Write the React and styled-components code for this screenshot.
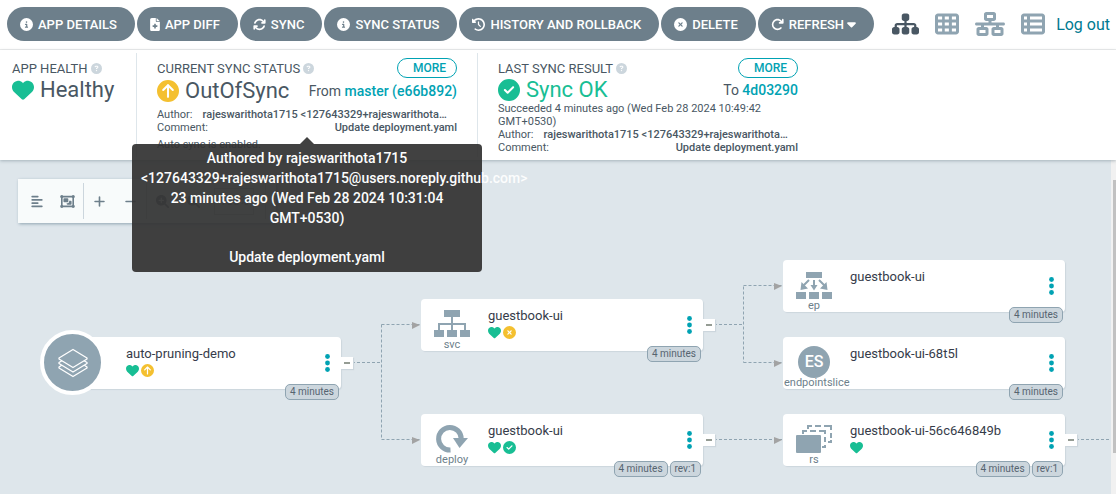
import React from 'react';
import styled, { createGlobalStyle } from 'styled-components';
import {
  FaCircleInfo, FaFileMedical, FaArrowsRotate, FaClockRotateLeft, FaCircleXmark,
  FaArrowRotateRight, FaCaretDown, FaSitemap, FaTableCells, FaNetworkWired, FaTableList,
  FaHeart, FaCircleArrowUp, FaCircleCheck, FaCircleQuestion, FaAlignLeft, FaObjectGroup,
  FaPlus, FaMinus, FaMagnifyingGlassPlus, FaMagnifyingGlassMinus,
} from 'react-icons/fa6';

const color = {
  slate: '#6d7f8b',
  text: '#495763',
  icon: '#8fa4b1',
  teal: '#00a2b3',
  green: '#18be94',
  yellow: '#f4c030',
  canvas: '#dee6eb',
  badge: '#ccd6dd',
};

const GlobalStyle = createGlobalStyle`
  * { box-sizing: border-box; }
  body { margin: 0; font-family: Roboto, "Liberation Sans", sans-serif; color: ${color.text}; background: #fff; }
  button, input { font-family: inherit; margin: 0; }
  button { cursor: pointer; }
`;

const Page = styled.div`
  display: flex;
  flex-direction: column;
  height: 100vh;
  overflow: hidden;
`;

const Toolbar = styled.header`
  display: flex;
  align-items: center;
  flex: none;
  padding: 7px 6px 8px 7px;
  border-bottom: 1px solid #eee;
  white-space: nowrap;
`;

const Actions = styled.div`
  display: flex;
  gap: 2px;
`;

const ActionButton = styled.button`
  display: flex;
  align-items: center;
  height: 34px;
  padding: 0 18px 0 13px;
  border: 0;
  border-radius: 17px;
  background: ${color.slate};
  color: #fff;
  font-size: 13px;
  font-weight: 500;
  svg { height: 13px; width: ${(p) => p.$iconWidth || 13}px; }
  span { padding-left: 5px; }
  span + svg { width: 9px; height: 14px; margin-left: 3px; }
`;

const Views = styled.nav`
  display: flex;
  align-items: center;
  gap: 16px;
  margin-left: auto;
  padding-right: 11px;
`;

const ViewButton = styled.button`
  display: flex;
  padding: 0;
  border: 0;
  background: none;
  color: ${(p) => (p.$active ? color.text : color.icon)};
  svg { height: 24px; width: ${(p) => p.$width}px; }
`;

const LogOut = styled.a`
  color: #007a91;
  font-size: 16px;
  text-decoration: none;
`;

const StatusPanel = styled.section`
  display: flex;
  flex: none;
  position: relative;
  z-index: 1;
  min-height: 110px;
  padding: 3px 0;
  background: #fff;
  box-shadow: 0 1px 3px rgba(109, 127, 139, 0.5);
`;

const StatusItem = styled.div`
  box-sizing: content-box;
  width: ${(p) => p.$width}px;
  padding: 5px 20px 0 ${(p) => (p.$first ? 12 : 20)}px;
  border-left: ${(p) => (p.$first ? 0 : 1)}px solid ${color.canvas};
  white-space: nowrap;
`;

const StatusHead = styled.div`
  display: flex;
  align-items: center;
  justify-content: space-between;
  height: 20px;
`;

const Label = styled.span`
  display: flex;
  align-items: center;
  gap: 3px;
  font-size: 13px;
  svg { width: 11px; height: 11px; color: ${color.badge}; }
`;

const MoreButton = styled.button`
  height: 20px;
  width: 60px;
  padding: 0 10px 0 15px;
  border: 1px solid ${color.teal};
  border-radius: 10px;
  background: #fff;
  color: ${color.teal};
  font-size: 12px;
  font-weight: 500;
`;

const ValueRow = styled.div`
  display: flex;
  align-items: center;
  justify-content: space-between;
  height: ${(p) => (p.$tall ? 25 : 24)}px;
  margin-bottom: ${(p) => (p.$tall ? 5 : 0)}px;
  font-size: 14px;
`;

const Value = styled.span`
  display: flex;
  align-items: center;
  gap: 6px;
  font-size: 22px;
  line-height: 24px;
  color: ${(p) => p.$color || color.text};
  svg { width: 22px; height: 22px; color: ${(p) => p.$icon}; }
`;

const RevisionLink = styled.a`
  color: ${color.teal};
  font-weight: 500;
  text-decoration: none;
`;

const Detail = styled.div`
  display: flex;
  justify-content: ${(p) => (p.$start ? 'flex-start' : 'space-between')};
  gap: 10px;
  margin-top: ${(p) => p.$space || 0}px;
  font-size: 11px;
  line-height: 13px;
  white-space: ${(p) => (p.$wrap ? 'normal' : 'nowrap')};
  strong { font-weight: 500; }
`;

const Tooltip = styled.div`
  position: absolute;
  z-index: 2;
  left: 132px;
  top: 94px;
  width: 350px;
  padding: 4px 9px 5px;
  border-radius: 4px;
  background: #333;
  opacity: 0.93;
  color: #fff;
  font-size: 14px;
  font-weight: 500;
  line-height: 20px;
  text-align: center;
  white-space: normal;
  &::before {
    content: '';
    position: absolute;
    left: 168px;
    top: -7px;
    border: solid transparent;
    border-width: 0 7px 7px;
    border-bottom-color: #333;
  }
  p { margin: 0 0 19px; }
  p:last-child { margin: 0; }
`;

const Canvas = styled.main`
  position: relative;
  flex: 1;
  overflow: hidden;
  background: ${color.canvas};
`;

const GraphTools = styled.div`
  position: absolute;
  left: 18px;
  top: 19px;
  display: flex;
  align-items: center;
  height: 44px;
  padding: 4px 10px 4px 3px;
  background: #f8fbfb;
  box-shadow: 1px 1px 3px ${color.icon};
`;

const ToolGroup = styled.div`
  display: flex;
  align-items: center;
  height: 36px;
  border-right: 1px solid ${color.badge};
  input {
    width: 40px;
    height: 27px;
    margin: 0 11px 0 5px;
    padding: 0;
    border: 1px solid ${color.badge};
    background: none;
    text-align: center;
    font-size: 12px;
    color: ${color.slate};
  }
`;

const ToolButton = styled.button`
  display: flex;
  justify-content: center;
  width: 31px;
  padding: 0;
  border: 0;
  background: none;
  color: ${color.slate};
  svg { height: 13px; width: ${(p) => p.$iconWidth || 13}px; }
`;

const Edges = styled.svg`
  position: absolute;
  left: 0;
  top: 0;
  path { fill: none; stroke: ${color.icon}; stroke-dasharray: 3 2; }
  polygon { fill: #a3a3a3; }
`;

const NodeCard = styled.article`
  position: absolute;
  left: ${(p) => p.$x}px;
  top: ${(p) => p.$y}px;
  display: flex;
  width: 282px;
  height: 52px;
  border-radius: 4px;
  background: #fff;
  box-shadow: 1px 1px 1px ${color.badge};
`;

const KindColumn = styled.div`
  display: flex;
  flex-direction: column;
  flex: none;
  width: 62px;
  padding-top: 9px;
`;

const KindIcon = styled.div`
  display: flex;
  justify-content: center;
  align-items: flex-start;
  height: 31px;
`;

const KindLabel = styled.div`
  display: flex;
  align-self: flex-start;
  justify-content: center;
  min-width: 100%;
  padding: 0 1px;
  font-size: 11px;
  line-height: 12px;
  color: ${color.slate};
  white-space: nowrap;
`;

const RootBadge = styled.div`
  display: flex;
  align-items: center;
  justify-content: center;
  flex: none;
  width: 65px;
  height: 65px;
  margin: -7px 16px 0 -19px;
  border: 4px solid #fff;
  border-radius: 50%;
  background: ${color.icon};
`;

const SliceBadge = styled.div`
  flex: none;
  width: 32px;
  height: 32px;
  border-radius: 50%;
  background: ${color.icon};
  color: #fff;
  font-size: 16px;
  font-weight: 500;
  line-height: 32px;
  text-align: center;
`;

const NodeBody = styled.div`
  flex: 1;
  padding: 8px 0 0 5px;
  font-size: 13px;
  line-height: 17px;
  color: #363c4a;
`;

const NodeStatus = styled.div`
  display: flex;
  gap: 2px;
  padding-top: 2px;
  svg { width: 13px; height: 13px; }
`;

const MenuButton = styled.button`
  align-self: center;
  display: flex;
  padding: 0 11px;
  border: 0;
  background: none;
`;

const Badges = styled.div`
  position: absolute;
  right: 2px;
  bottom: -11px;
  display: flex;
  gap: 2px;
  span {
    height: 16px;
    padding: 0 4px;
    border: 1px solid ${color.icon};
    border-radius: 5px;
    background: ${color.badge};
    color: #566470;
    font-size: 10px;
    line-height: 14px;
    white-space: nowrap;
  }
`;

const Collapse = styled.button`
  position: absolute;
  left: 282px;
  top: 20px;
  display: flex;
  align-items: center;
  justify-content: center;
  width: 12px;
  height: 12px;
  padding: 0;
  border: 0;
  background: #fff;
  box-shadow: 1px 1px 1px ${color.badge};
  &::before { content: ''; width: 6px; height: 2px; background: #959c94; }
`;

const ScrollTrack = styled.div`
  position: absolute;
  right: 0;
  top: 0;
  bottom: 0;
  width: 5px;
  padding: 20px 0 0 2px;
  background: #f1f1f1;
  &::before { content: ''; display: block; height: 273px; background: #c1c1c1; }
`;

const LayersIcon = () => (
  <svg width="30" height="30" viewBox="0 0 30 30" fill={color.icon} stroke="#fff" strokeWidth="1.3" strokeLinejoin="round">
    <path d="M1 19 15 10 29 19v1L15 28.500 1 20z" />
    <path d="M1 14.500 15 6 29 14.500v1L15 24 1 15.500z" />
    <path d="M1 10 15 1.500 29 10v1L15 19.500 1 11z" />
  </svg>
);

const ServiceIcon = () => (
  <svg width="36" height="30" viewBox="0 0 36 30" fill={color.icon}>
    <path d="M10 2h16v7H10zM0 22h10v7H0zM13 22h10v7H13zM26 22h10v7H26z" />
    <path d="M18 9v13M5 22v-6h26v6" fill="none" stroke={color.icon} strokeWidth="2" />
  </svg>
);

const EndpointIcon = () => (
  <svg width="36" height="30" viewBox="0 0 36 30" fill={color.icon}>
    <path d="M10 3h16v6H10zM0 23h10v7H0zM13 23h10v7H13zM26 23h10v7H26z" />
    <path d="M4.500 21l1-8 6.500 6.500zM31.500 21l-1-8-6.500 6.500zM14.500 16h7L18 21.500z" />
    <path d="M13 11l-6 6M23 11l6 6M18 11v6" stroke={color.icon} strokeWidth="2" />
  </svg>
);

const DeployIcon = () => (
  <svg width="36" height="30" viewBox="0 0 36 30">
    <path d="M16.500 27A11.300 11.300 0 1 1 27.200 15.700" fill="none" stroke={color.icon} strokeWidth="5" />
    <path d="M19 15h15l-8.500 10z" fill={color.icon} />
  </svg>
);

const ReplicaIcon = () => (
  <svg width="36" height="30" viewBox="0 0 36 30">
    <path d="M12 6V3h4M19 3h6M28 3h7v4M35 10v5M35 17v2h-3" fill="none" stroke={color.icon} strokeWidth="2" />
    <path d="M7 11V8h4M14 8h6M23 8h6v3M29 14v5M29 22v2h-3" fill="none" stroke={color.icon} strokeWidth="2" />
    <rect y="12" width="25" height="18" rx="1" fill={color.icon} />
  </svg>
);

const Dots = () => (
  <svg width="5" height="18" viewBox="0 0 5 18" fill={color.teal}>
    <circle cx="2.500" cy="2.500" r="2.400" />
    <circle cx="2.500" cy="9" r="2.400" />
    <circle cx="2.500" cy="15.500" r="2.400" />
  </svg>
);

const statusIcons = {
  healthy: <FaHeart key="healthy" color={color.green} />,
  outOfSync: <FaCircleArrowUp key="outOfSync" color={color.yellow} />,
  pruned: <FaCircleXmark key="pruned" color={color.yellow} />,
  synced: <FaCircleCheck key="synced" color={color.green} />,
};

const actions = [
  { label: 'APP DETAILS', Icon: FaCircleInfo },
  { label: 'APP DIFF', Icon: FaFileMedical, width: 10 },
  { label: 'SYNC', Icon: FaArrowsRotate },
  { label: 'SYNC STATUS', Icon: FaCircleInfo },
  { label: 'HISTORY AND ROLLBACK', Icon: FaClockRotateLeft },
  { label: 'DELETE', Icon: FaCircleXmark },
  { label: 'REFRESH', Icon: FaArrowRotateRight, Caret: FaCaretDown },
];

const views = [
  { label: 'Tree', Icon: FaSitemap, width: 27 },
  { label: 'Pods', Icon: FaTableCells, width: 24 },
  { label: 'Network', Icon: FaNetworkWired, width: 30 },
  { label: 'List', Icon: FaTableList, width: 24 },
];

const nodes = [
  { x: 59, y: 177, name: 'auto-pruning-demo', root: true, status: ['healthy', 'outOfSync'], badges: ['4 minutes'], open: true },
  { x: 421, y: 139, name: 'guestbook-ui', kind: 'svc', icon: <ServiceIcon />, status: ['healthy', 'pruned'], badges: ['4 minutes'], open: true },
  { x: 421, y: 254, name: 'guestbook-ui', kind: 'deploy', icon: <DeployIcon />, status: ['healthy', 'synced'], badges: ['4 minutes', 'rev:1'], open: true },
  { x: 783, y: 100, name: 'guestbook-ui', kind: 'ep', icon: <EndpointIcon />, status: [], badges: ['4 minutes'] },
  { x: 783, y: 177, name: 'guestbook-ui-68t5l', kind: 'endpointslice', icon: <SliceBadge>ES</SliceBadge>, status: [], badges: ['4 minutes'] },
  { x: 783, y: 254, name: 'guestbook-ui-56c646849b', kind: 'rs', icon: <ReplicaIcon />, status: ['healthy'], badges: ['4 minutes', 'rev:1'], open: true },
];

const arrows = [[412, 165], [412, 280], [774, 126], [774, 203], [774, 280]];

function Node({ node }) {
  return (
    <NodeCard $x={node.x} $y={node.y}>
      {node.root ? (
        <RootBadge><LayersIcon /></RootBadge>
      ) : (
        <KindColumn>
          <KindIcon>{node.icon}</KindIcon>
          <KindLabel>{node.kind}</KindLabel>
        </KindColumn>
      )}
      <NodeBody>
        {node.name}
        <NodeStatus>{node.status.map((s) => statusIcons[s])}</NodeStatus>
      </NodeBody>
      <MenuButton aria-label="Resource menu"><Dots /></MenuButton>
      <Badges>{node.badges.map((b) => <span key={b}>{b}</span>)}</Badges>
      {node.open && <Collapse aria-label="Collapse" />}
    </NodeCard>
  );
}

function CommitDetails() {
  return (
    <>
      <Detail $start>Author: <strong>rajeswarithota1715 &lt;127643329+rajeswarithota…</strong></Detail>
      <Detail>Comment: <strong>Update deployment.yaml</strong></Detail>
    </>
  );
}

export default function App() {
  return (
    <Page>
      <GlobalStyle />
      <Toolbar>
        <Actions>
          {actions.map(({ label, Icon, width, Caret }) => (
            <ActionButton key={label} $iconWidth={width}>
              <Icon /><span>{label}</span>{Caret && <Caret />}
            </ActionButton>
          ))}
        </Actions>
        <Views>
          {views.map(({ label, Icon, width }, i) => (
            <ViewButton key={label} aria-label={label} $width={width} $active={i === 0}><Icon /></ViewButton>
          ))}
        </Views>
        <LogOut href="#logout">Log out</LogOut>
      </Toolbar>

      <StatusPanel>
        <StatusItem $width={104} $first>
          <StatusHead><Label>APP HEALTH <FaCircleQuestion /></Label></StatusHead>
          <ValueRow><Value $icon={color.green}><FaHeart />Healthy</Value></ValueRow>
        </StatusItem>
        <StatusItem $width={300}>
          <StatusHead>
            <Label>CURRENT SYNC STATUS <FaCircleQuestion /></Label>
            <MoreButton>MORE</MoreButton>
          </StatusHead>
          <ValueRow $tall>
            <Value $icon={color.yellow}><FaCircleArrowUp />OutOfSync</Value>
            <span>From <RevisionLink href="#master">master (e66b892)</RevisionLink></span>
          </ValueRow>
          <CommitDetails />
          <Detail $space={4}>Auto sync is enabled.</Detail>
        </StatusItem>
        <StatusItem $width={300}>
          <StatusHead>
            <Label>LAST SYNC RESULT <FaCircleQuestion /></Label>
            <MoreButton>MORE</MoreButton>
          </StatusHead>
          <ValueRow>
            <Value $icon={color.green} $color={color.green}><FaCircleCheck />Sync OK</Value>
            <span>To <RevisionLink href="#revision">4d03290</RevisionLink></span>
          </ValueRow>
          <Detail $wrap>Succeeded 4 minutes ago (Wed Feb 28 2024 10:49:42 GMT+0530)</Detail>
          <CommitDetails />
        </StatusItem>
        <Tooltip role="tooltip">
          <p>
            Authored by rajeswarithota1715 &lt;127643329+rajeswarithota1715@users.noreply.github.com&gt;
            {' '}23 minutes ago (Wed Feb 28 2024 10:31:04 GMT+0530)
          </p>
          <p>Update deployment.yaml</p>
        </Tooltip>
      </StatusPanel>

      <Canvas>
        <GraphTools>
          <ToolGroup>
            <ToolButton aria-label="Compact" $iconWidth={12}><FaAlignLeft /></ToolButton>
            <ToolButton aria-label="Group nodes" $iconWidth={15}><FaObjectGroup /></ToolButton>
          </ToolGroup>
          <ToolGroup>
            <ToolButton aria-label="Expand all"><FaPlus /></ToolButton>
            <ToolButton aria-label="Collapse all"><FaMinus /></ToolButton>
          </ToolGroup>
          <ToolGroup>
            <ToolButton aria-label="Zoom in"><FaMagnifyingGlassPlus /></ToolButton>
            <ToolButton aria-label="Zoom out"><FaMagnifyingGlassMinus /></ToolButton>
            <input aria-label="Zoom level" defaultValue="100%" />
          </ToolGroup>
        </GraphTools>
        <Edges width="1111" height="334" viewBox="0 0 1111 334">
          <path d="M352 202.500H381.500M381.500 164.500V279.500M381.500 164.500H421M381.500 279.500H421" />
          <path d="M714 164.500H743.500M743.500 126.500V202.500M743.500 125.500H783M743.500 202.500H783M714 279.500H783M1076 279.500H1111" />
          {arrows.map(([x, y]) => (
            <polygon key={`${x}-${y}`} points={`${x},${y - 3} ${x + 8},${y} ${x},${y + 4}`} />
          ))}
        </Edges>
        {nodes.map((node) => <Node key={`${node.x}-${node.y}`} node={node} />)}
        <ScrollTrack />
      </Canvas>
    </Page>
  );
}
